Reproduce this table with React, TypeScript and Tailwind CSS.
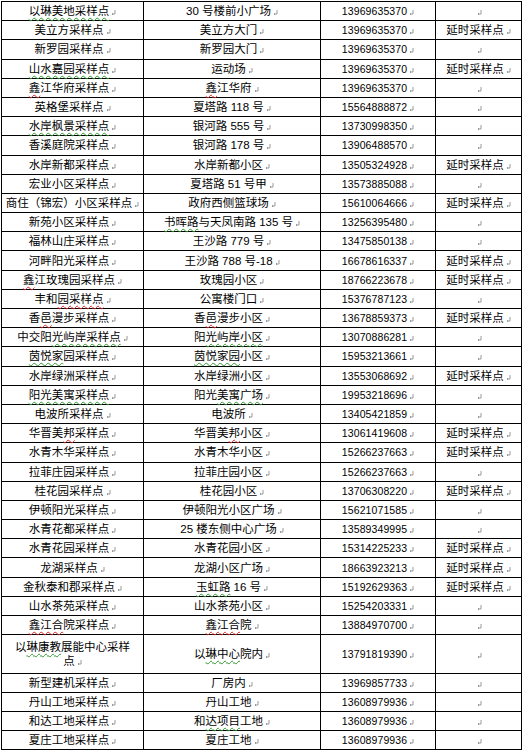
import React from "react";

type Row = [string, string, string, string];

// {g:...} = green wavy underline (grammar), {r:...} = red wavy underline (spelling)
const rows: Row[] = [
  ["{g:以琳美地采样点}", "30 号楼前小广场", "13969635370", ""],
  ["美立方采样点", "美立方大门", "13969635370", "延时采样点"],
  ["新罗园采样点", "新罗园大门", "13969635370", ""],
  ["{g:山水嘉园采样点}", "运动场", "13969635370", "延时采样点"],
  ["{r:鑫}江华府采样点", "{r:鑫}江华府", "13969635370", ""],
  ["英格堡采样点", "夏塔路 118 号", "15564888872", ""],
  ["{g:水岸枫景采样点}", "银河路 555 号", "13730998350", ""],
  ["香溪庭院采样点", "银河路 178 号", "13906488570", ""],
  ["水岸新都采样点", "水岸新都小区", "13505324928", "延时采样点"],
  ["宏业小区采样点", "夏塔路 51 号甲", "13573885088", ""],
  ["商住（锦宏）小区采样点", "政府西侧篮球场", "15610064666", "延时采样点"],
  ["新苑小区采样点", "{g:书晖路}与天凤南路 135 号", "13256395480", ""],
  ["福林山庄采样点", "王沙路 779 号", "13475850138", ""],
  ["河畔阳光采样点", "王沙路 788 号-18", "16678616337", "延时采样点"],
  ["{r:鑫}江玫瑰园采样点", "玫瑰园小区", "18766223678", "延时采样点"],
  ["丰和{r:园采样点}", "公寓楼门口", "15376787123", ""],
  ["香{r:邑}漫步采样点", "香{r:邑}漫步小区", "13678859373", "延时采样点"],
  ["中交阳{g:光屿岸采样点}", "阳{g:光屿岸小区}", "13070886281", ""],
  ["{g:茵悦家}园采样点", "{g:茵悦家园}小区", "15953213661", ""],
  ["水岸绿洲采样点", "水岸绿洲小区", "13553068692", "延时采样点"],
  ["{g:阳光美寓采样点}", "阳光{g:美寓广场}", "19953218696", ""],
  ["电波所采样点", "电波所", "13405421859", ""],
  ["华晋美{r:邦}采样点", "华晋美{r:邦}小区", "13061419608", "延时采样点"],
  ["水青木华采样点", "水青木华小区", "15266237663", "延时采样点"],
  ["拉菲庄园采样点", "拉菲庄园小区", "15266237663", ""],
  ["桂花园采样点", "桂花园小区", "13706308220", "延时采样点"],
  ["伊顿阳光采样点", "伊顿阳光小区广场", "15621071585", ""],
  ["水青花都采样点", "25 楼东侧中心广场", "13589349995", ""],
  ["水青花园采样点", "水青花园小区", "15314225233", "延时采样点"],
  ["龙湖采样点", "龙湖小区广场", "18663923213", "延时采样点"],
  ["金秋泰和郡采样点", "{g:玉虹路} 16 号", "15192629363", "延时采样点"],
  ["山水茶苑采样点", "山水茶苑小区", "15254203331", ""],
  ["{r:鑫江合}院采样点", "{r:鑫江合}院", "13884970700", ""],
  ["以{g:琳康教}展能中心采样\n点", "以{g:琳中心}院内", "13791819390", ""],
  ["新型建机采样点", "厂房内", "13969857733", ""],
  ["丹山工地采样点", "丹山工地", "13608979936", ""],
  ["和达工地采样点", "和{g:达项目}工地", "13608979936", ""],
  ["夏庄工地采样点", "夏庄工地", "13608979936", ""],
];

function CellMark() {
  return (
    <svg width="5" height="5" viewBox="0 0 5 5" className="ml-[2px] inline-block align-baseline">
      <path d="M4 0V4H1M2 3L1 4L2 5" stroke="#9a9a9a" strokeWidth="1" fill="none" />
    </svg>
  );
}

function CellText({ text }: { text: string }) {
  const parts = text.split(/(\{[rg]:[^}]*\})/).filter(Boolean);

  return (
    <>
      {parts.map((part, i) => {
        const m = part.match(/^\{([rg]):([^}]*)\}$/);
        if (!m) {
          return <span key={i}>{part}</span>;
        }
        return (
          <span
            key={i}
            className={
              m[1] === "r"
                ? "underline decoration-wavy decoration-[#e02020] decoration-1 underline-offset-[2px]"
                : "underline decoration-wavy decoration-[#2e9a2e] decoration-1 underline-offset-[2px]"
            }
          >
            {m[2]}
          </span>
        );
      })}
      <CellMark />
    </>
  );
}

export default function App() {
  return (
    <div className="min-h-[752px] w-[526px] bg-white pl-[1px] pt-[1px]">
      <table
        className="w-[520px] table-fixed border-collapse text-[11.5px] leading-[14px] text-black"
        style={{ fontFamily: '"Liberation Sans", "Noto Sans CJK SC", sans-serif' }}
      >
        <colgroup>
          <col className="w-[142px]" />
          <col className="w-[177px]" />
          <col className="w-[115px]" />
          <col className="w-[86px]" />
        </colgroup>
        <tbody>
          {rows.map((row, r) => {
            const tall = row[0].includes("\n");
            return (
              <tr key={r} className={tall ? "h-[38.4px]" : "h-[19.2px]"}>
                <td className="whitespace-pre-line border border-black p-0 px-[2px] text-center">
                  <CellText text={row[0]} />
                </td>
                <td className="whitespace-nowrap border border-black p-0 text-center">
                  <CellText text={row[1]} />
                </td>
                <td className="whitespace-nowrap border border-black p-0 text-center text-[10.5px] tracking-[0.1px]">
                  <CellText text={row[2]} />
                </td>
                <td className="whitespace-nowrap border border-black p-0 text-center">
                  <CellText text={row[3]} />
                </td>
              </tr>
            );
          })}
        </tbody>
      </table>
    </div>
  );
}
